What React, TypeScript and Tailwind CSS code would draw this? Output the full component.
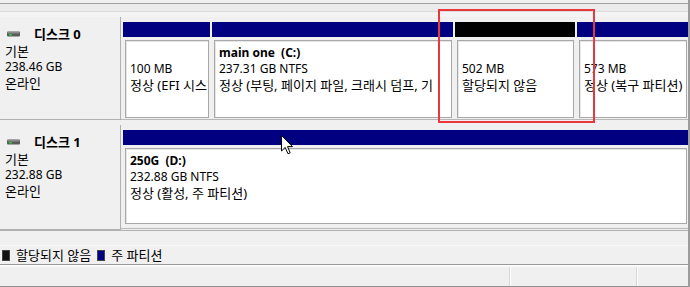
import React from "react";

const font = { fontFamily: '"Noto Sans", "Noto Sans CJK KR", sans-serif' };

function DiskIcon() {
  return (
    <svg width="13" height="6" viewBox="0 0 13 6" className="shrink-0">
      <rect x="0" y="0.5" width="13" height="5" rx="1" fill="#5a5a5a" />
      <rect x="0.5" y="1" width="12" height="1.5" fill="#8a8a8a" />
      <rect x="2" y="3" width="3" height="1.5" fill="#3fbf3f" />
    </svg>
  );
}

function Label({ n, size }: { n: string; size: string }) {
  return (
    <div className="w-[121px] shrink-0 bg-[#f0f0f0] border-r border-b border-[#b0b0b0] pt-[7px] pl-[5px] text-[12px] leading-4 text-black">
      <div className="flex items-center h-[19px]">
        <div className="ml-[2px] mr-[14px] flex items-center">
          <DiskIcon />
        </div>
        <span className="font-bold text-[13px]">디스크 {n}</span>
      </div>
      <div className="text-[13px]">기본</div>
      <div>{size}</div>
      <div className="text-[13px]">온라인</div>
    </div>
  );
}

function Part({
  w,
  color,
  name,
  l2,
  l3,
  l2k,
  h,
}: {
  w?: string;
  color: string;
  name?: string;
  l2: string;
  l3: string;
  l2k?: boolean;
  h: string;
}) {
  return (
    <div className={`${w ?? "flex-1"} shrink-0 flex flex-col min-w-0`}>
      <div className={`h-[15px] ${color}`} />
      <div
        className={`mt-[3px] ${h} ml-[2px] mr-[1px] bg-white border border-[#a8a8a8] shadow-[inset_1px_1px_0_#e6e6e6] pl-[4px] pt-[4px] text-[12px] leading-4 text-black overflow-hidden whitespace-nowrap`}
      >
        <div className="h-4 font-bold whitespace-pre">{name ?? ""}</div>
        <div className={l2k ? "text-[13px]" : ""}>{l2}</div>
        <div className="text-[13px]">{l3}</div>
      </div>
    </div>
  );
}

export default function App() {
  return (
    <div
      className="relative w-[690px] h-[287px] bg-[#f0f0f0] overflow-hidden flex flex-col border-r-2 border-[#9c9c9c]"
      style={font}
    >
      {/* top chrome */}
      <div className="h-[3px] shrink-0" />
      <div className="h-px bg-[#a0a0a0] shrink-0" />
      <div className="h-[7px] shrink-0 bg-[#ebebeb]" />
      <div className="h-px bg-[#dcdcdc] shrink-0" />
      <div className="h-[5px] shrink-0 bg-[#f4f4f4]" />

      {/* disk 0 */}
      <div className="flex h-[103px] shrink-0">
        <Label n="0" size="238.46 GB" />
        <div className="flex-1 flex gap-[2px] pt-[5px] pl-[2px] border-b border-[#b8b8b8] min-w-0">
          <Part w="w-[87px]" color="bg-[#000080]" l2="100 MB" l3="정상 (EFI 시스" h="h-[78px]" />
          <Part
            w="w-[241px]"
            color="bg-[#000080]"
            name="main one  (C:)"
            l2="237.31 GB NTFS"
            l3="정상 (부팅, 페이지 파일, 크래시 덤프, 기"
            h="h-[78px]"
          />
          <Part w="w-[120px]" color="bg-black" l2="502 MB" l3="할당되지 않음" h="h-[78px]" />
          <Part color="bg-[#000080]" l2="573 MB" l3="정상 (복구 파티션)" h="h-[78px]" />
        </div>
      </div>

      <div className="h-[5px] shrink-0" />

      {/* disk 1 */}
      <div className="flex h-[105px] shrink-0">
        <Label n="1" size="232.88 GB" />
        <div className="flex-1 flex pt-[5px] pl-[2px] pb-[2px] border-b border-[#b8b8b8] mb-[1px] min-w-0">
          <Part
            color="bg-[#000080]"
            name="250G  (D:)"
            l2="232.88 GB NTFS"
            l3="정상 (활성, 주 파티션)"
            h="h-[76px]"
          />
        </div>
      </div>

      {/* legend area */}
      <div className="h-px bg-[#b0b0b0] shrink-0" />
      <div className="h-[14px] shrink-0" />
      <div className="h-px bg-[#f8f8f8] shrink-0" />
      <div className="h-[18px] shrink-0 flex items-center text-[13px] leading-4 text-black pl-[2px]">
        <span className="w-[8px] h-[11px] bg-[#111111] border border-[#444] mr-[6px]" />
        <span>할당되지 않음</span>
        <span className="w-[8px] h-[11px] bg-[#000080] border border-[#444] ml-[6px] mr-[6px]" />
        <span>주 파티션</span>
      </div>
      <div className="h-px bg-[#9a9a9a] shrink-0" />
      <div className="h-[2px] bg-[#fafafa] shrink-0" />
      <div className="flex-1 flex">
        <div className="w-[510px] border-r border-[#d8d8d8] shadow-[1px_0_0_#ffffff]" />
        <div className="w-[127px] border-r border-[#d8d8d8] shadow-[1px_0_0_#ffffff]" />
        <div className="flex-1" />
      </div>
      <div className="h-px bg-[#8e8e8e] shrink-0" />

      {/* red highlight */}
      <div className="absolute left-[438px] top-[9px] w-[157px] h-[114px] border-2 border-[#e8383d]" />

      {/* mouse cursor */}
      <svg className="absolute left-[281px] top-[135px]" width="13" height="20" viewBox="0 0 13 20">
        <path d="M0.5 0.5 L0.5 16 L4.2 12.4 L7 18.8 L9.2 17.8 L6.5 11.6 L11.5 11.6 Z" fill="#ffffff" stroke="#000000" strokeWidth="1" />
      </svg>
    </div>
  );
}
